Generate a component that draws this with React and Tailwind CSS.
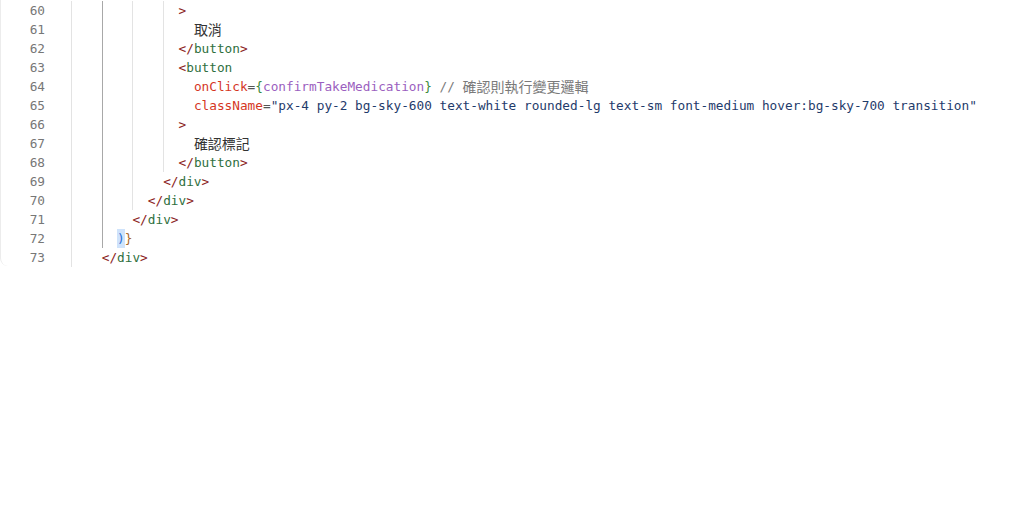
import React from "react";

// colours picked from the editor theme in the screenshot
const c = {
  br: "text-[#8b2222]",
  tag: "text-[#2f6f3e]",
  attr: "text-[#d5361f]",
  op: "text-[#555]",
  brace: "text-[#3c8a3c]",
  ident: "text-[#9b5fc0]",
  cmt: "text-[#7a7a7a]",
  str: "text-[#1f3b6b]",
  txt: "text-[#333]",
};

const Cjk = ({ children, className = "" }) => (
  <span className={`text-[14px] font-['Noto_Sans_CJK_TC',sans-serif] ${className}`}>{children}</span>
);

const Open = ({ name }) => (
  <>
    <span className={c.br}>&lt;</span>
    <span className={c.tag}>{name}</span>
  </>
);

const Close = ({ name }) => (
  <>
    <span className={c.br}>&lt;/</span>
    <span className={c.tag}>{name}</span>
    <span className={c.br}>&gt;</span>
  </>
);

// guides: how many indent columns (0,4,8,12) get a vertical line; col 4 is the active one
const lines = [
  { n: 60, indent: 14, guides: 4, code: <span className={c.br}>&gt;</span> },
  { n: 61, indent: 16, guides: 4, code: <Cjk className={c.txt}>取消</Cjk> },
  { n: 62, indent: 14, guides: 4, code: <Close name="button" /> },
  { n: 63, indent: 14, guides: 4, code: <Open name="button" /> },
  {
    n: 64,
    indent: 16,
    guides: 4,
    code: (
      <>
        <span className={c.attr}>onClick</span>
        <span className={c.op}>=</span>
        <span className={c.brace}>{"{"}</span>
        <span className={c.ident}>confirmTakeMedication</span>
        <span className={c.brace}>{"}"}</span>
        <span className={c.cmt}> // </span>
        <Cjk className={c.cmt}>確認則執行變更邏輯</Cjk>
      </>
    ),
  },
  {
    n: 65,
    indent: 16,
    guides: 4,
    code: (
      <>
        <span className={c.attr}>className</span>
        <span className={c.op}>=</span>
        <span className={c.str}>
          "px-4 py-2 bg-sky-600 text-white rounded-lg text-sm font-medium hover:bg-sky-700 transition"
        </span>
      </>
    ),
  },
  { n: 66, indent: 14, guides: 4, code: <span className={c.br}>&gt;</span> },
  { n: 67, indent: 16, guides: 4, code: <Cjk className={c.txt}>確認標記</Cjk> },
  { n: 68, indent: 14, guides: 4, code: <Close name="button" /> },
  { n: 69, indent: 12, guides: 3, code: <Close name="div" /> },
  { n: 70, indent: 10, guides: 3, code: <Close name="div" /> },
  { n: 71, indent: 8, guides: 2, code: <Close name="div" /> },
  {
    n: 72,
    indent: 6,
    guides: 2,
    code: (
      <>
        <span className="bg-[#cfe3fb] text-[#2b6fd6]">)</span>
        <span className="text-[#a8672a]">{"}"}</span>
      </>
    ),
  },
  { n: 73, indent: 4, guides: 1, code: <Close name="div" /> },
];

const guideCols = [0, 4, 8, 12];
const CH = 7.68;

const Row = ({ line }) => {
  const blocks = guideCols.filter((col, i) => i < line.guides && col < line.indent);
  return (
    <div className="flex h-[19px] items-center pt-[1px] leading-[19px]">
      <div className="w-[70px] shrink-0 pr-[26px] text-right text-[#777]">{line.n}</div>
      <div className="flex h-[19px] items-center whitespace-pre">
        {blocks.map((col, i) => {
          const last = i === blocks.length - 1;
          const w = last ? (line.indent - col) * CH : 4 * CH;
          return (
            <span
              key={col}
              style={{ width: w }}
              className={`inline-block h-full shrink-0 border-l ${
                i === 1 ? "border-[#a8a8a8]" : "border-[#e3e3e3]"
              }`}
            />
          );
        })}
        {line.code}
      </div>
    </div>
  );
};

export default function App() {
  return (
    <div className="min-h-[518px] bg-white">
      <div className="h-[266px] rounded-bl-lg border-l border-[#ececec] font-['DejaVu_Sans_Mono',monospace] text-[12.75px]">
        {lines.map((line) => (
          <Row key={line.n} line={line} />
        ))}
      </div>
    </div>
  );
}
